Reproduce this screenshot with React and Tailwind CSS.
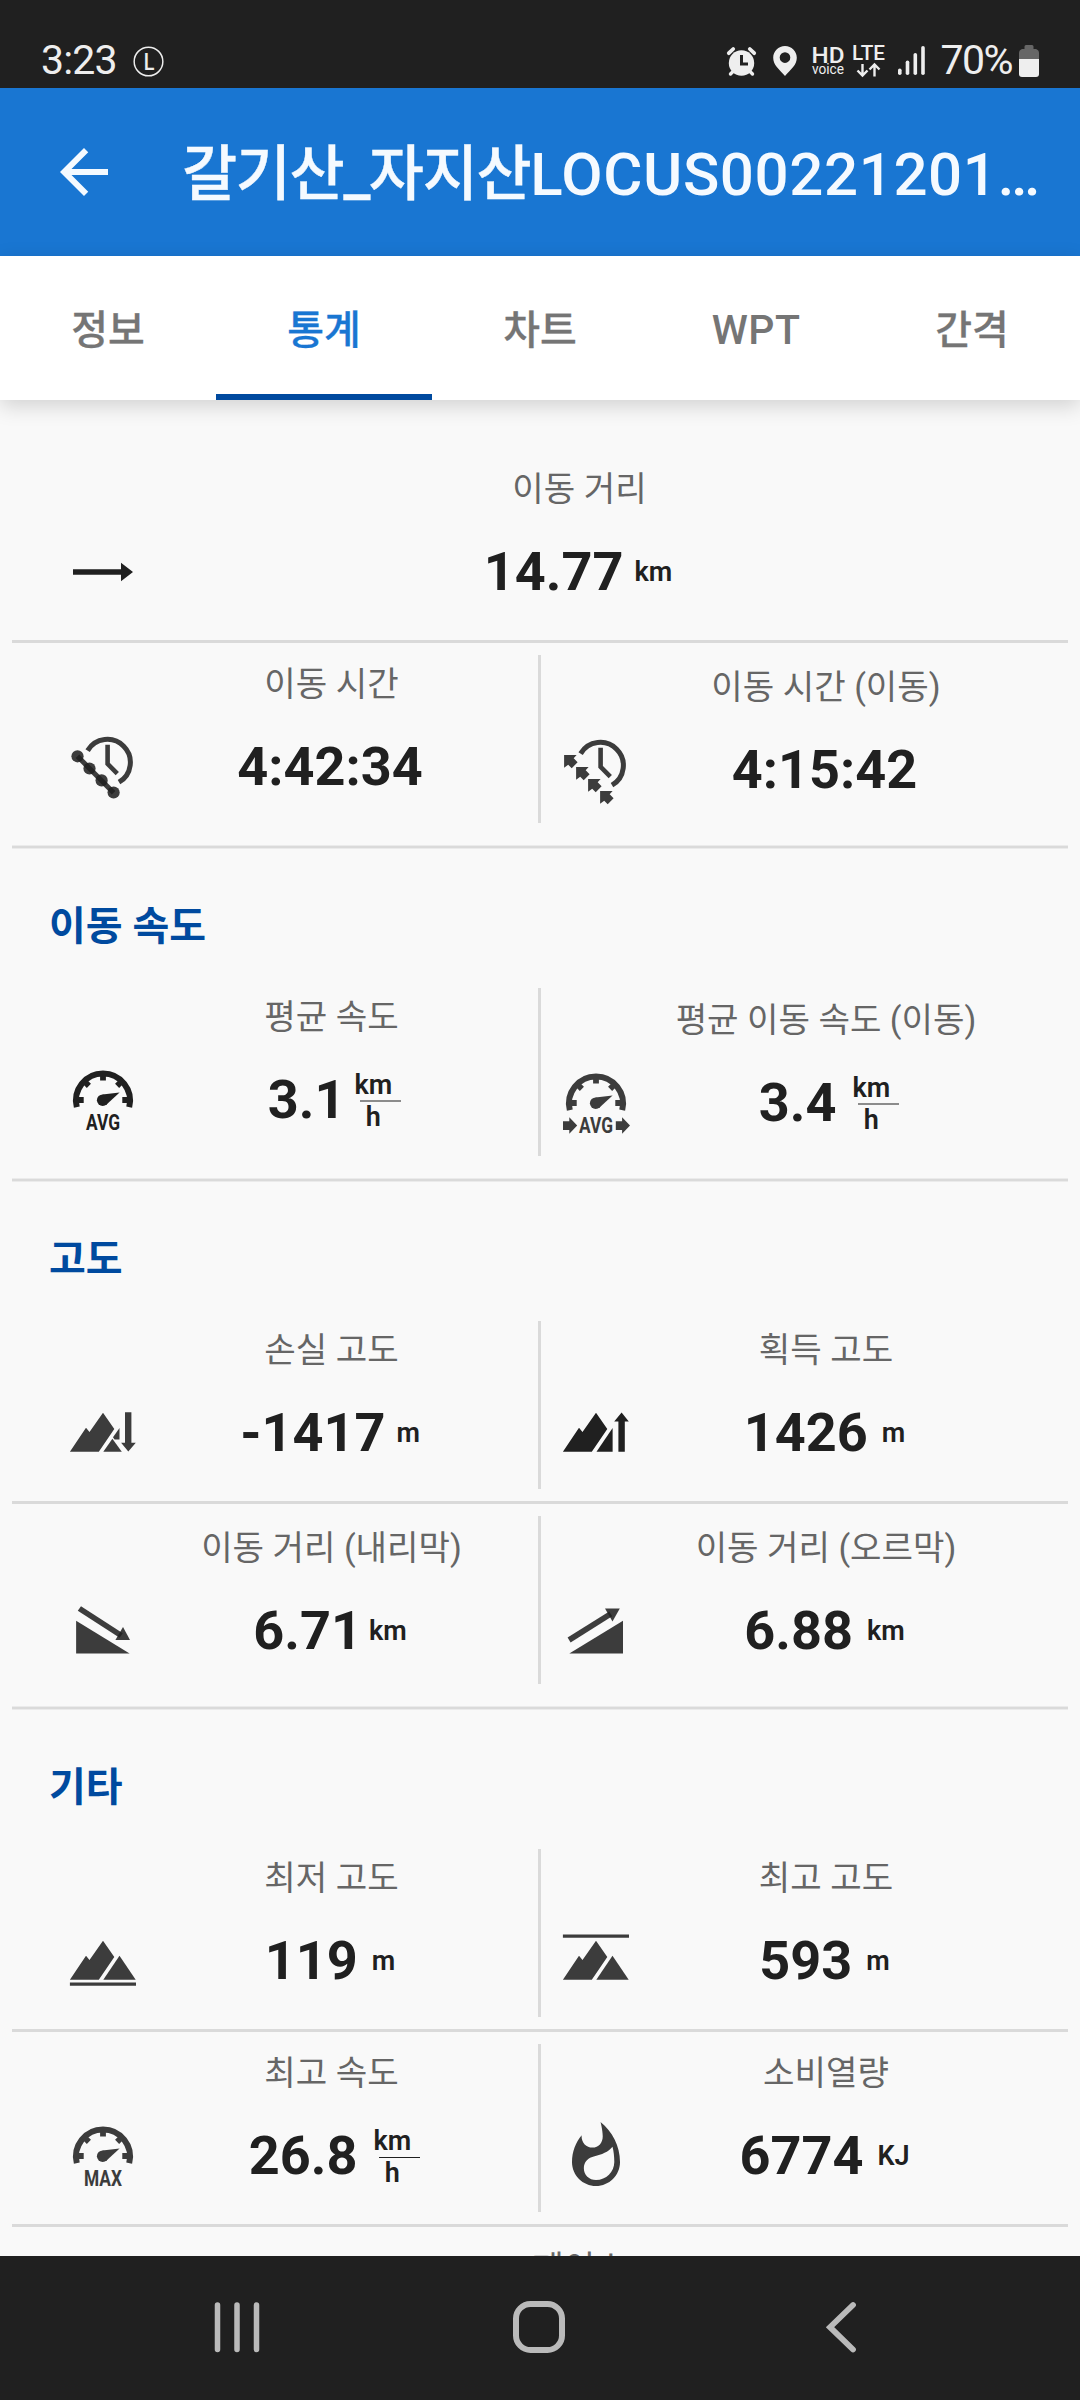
import { MdArrowBack } from 'react-icons/md'

const INK = '#202020'
const SOFT = '#3c3c3c'

const Svg = ({ children, fill = SOFT }) => (
  <svg viewBox="0 0 72 72" fill={fill} className="w-[72px] h-[72px] shrink-0 overflow-visible">
    {children}
  </svg>
)

const DistanceIcon = () => (
  <Svg fill={INK}>
    <path d="M6 33.2H54V26.7L66 36 54 45.2V38.8H6z" />
  </Svg>
)

const ClockFace = () => (
  <g fill="none" stroke={SOFT}>
    <path d="M20.6 19.6A23 23 0 1 1 52 51.2" strokeWidth="5" />
    <path d="M40.6 13.8V32.8L50.3 42.6" strokeWidth="4.6" />
  </g>
)

const TimeIcon = () => (
  <Svg>
    <ClockFace />
    <path d="M10.5 25.3L46.6 61.7" stroke={INK} strokeOpacity="0.87" strokeWidth="5" />
    {[[10.5, 25.3], [22.5, 37.5], [34.6, 49.4], [46.6, 61.5]].map(([x, y]) => (
      <circle key={x} cx={x} cy={y} r="6.1" fill={INK} fillOpacity="0.87" />
    ))}
  </Svg>
)

const TimeMovingIcon = () => (
  <Svg>
    <ClockFace />
    {[0, 12, 24, 36].map((d) => (
      <path key={d} transform={`translate(${d} ${d})`} d="M4.1 21H16.6L13.7 24.3 17.6 28.2 11.7 34.3 8.2 30.7 4.1 33.8z" />
    ))}
  </Svg>
)

const Gauge = ({ text, color = SOFT, children }) => (
  <Svg fill={color}>
    <path d="M9.8 43.1A27 27 0 1 1 62.2 43.1" fill="none" stroke={color} strokeWidth="6" />
    <path d="M11 36H16.7M61 36H55.3M36 11V16.4M17.5 17.5L21.9 21.9M54.5 17.5L50.1 21.9" fill="none" stroke={color} strokeWidth="5.8" />
    <circle cx="35.7" cy="36.2" r="5.8" />
    <path d="M35.5 30.4L52.6 28.6 39 40.9z" />
    <text
      x="36"
      y="66.2"
      fontSize="21.5"
      fontWeight="700"
      fontFamily="Roboto, sans-serif"
      textAnchor="middle"
      textLength={text === 'MAX' ? 38 : 34}
      lengthAdjust="spacingAndGlyphs"
    >
      {text}
    </text>
    {children}
  </Svg>
)

const AvgIcon = () => <Gauge text="AVG" color={INK} />
const MaxIcon = () => <Gauge text="MAX" />
const AvgMovingIcon = () => (
  <Gauge text="AVG">
    <path d="M3 54.3H9.3V50.3L17.2 58.5 9.3 66.7V63H3z" />
    <path d="M55.8 54.3H62.1V50.3L70 58.5 62.1 66.7V63H55.8z" />
  </Gauge>
)

const PEAK = 'M2.9 54.7L19 30.7 22.5 35 36 15.7 47.3 32 31.8 54.7z'

const LossIcon = () => (
  <Svg>
    <path d={PEAK} />
    <path d="M52.5 31V42.6H47.6L46 40.3z" />
    <path d="M45.4 41.8L54.8 54.7H36.3z" />
    <path d="M58 15.3H64.4V45.7H68.8L61.3 54.5 54.1 45.7H58z" />
  </Svg>
)

const GainIcon = () => (
  <Svg fill={INK}>
    <path d={PEAK} />
    <path d="M52.6 31V54.7H36.5z" />
    <path d="M58.4 54.7V24.5H54.2L61.6 15.6 68.8 24.5H64.8V54.7z" />
  </Svg>
)

const LowestIcon = () => (
  <Svg>
    <path d={PEAK} />
    <path d="M52.5 30.7L68.7 54.7H36.3z" />
    <path d="M2.9 57.4H69V60.7H2.9z" />
  </Svg>
)

const HighestIcon = () => (
  <Svg>
    <path d={PEAK} />
    <path d="M52.5 30.7L68.7 54.7H36.3z" />
    <path d="M2.9 9.4H69V12.7H2.9z" />
  </Svg>
)

const DownhillIcon = () => (
  <Svg>
    <path d="M9.1 25.7L62.6 58.5H9.1z" />
    <g fill={INK} fillOpacity="0.87">
      <path d="M14 11.2L55.8 38.2 52.6 42.8 10.8 15.8z" />
      <path d="M56 32L63 45H48.4z" />
    </g>
  </Svg>
)

const UphillIcon = () => (
  <Svg>
    <path d="M63 25.7V58.5H9.3z" />
    <g fill={INK} fillOpacity="0.87">
      <path d="M7.6 42.4L49.2 16.4 52.2 21.2 10.6 47.4z" />
      <path d="M45 13.4H59.8L52.5 26.5z" />
    </g>
  </Svg>
)

const FlameIcon = () => (
  <Svg>
    <path
      transform="scale(3)"
      fillRule="evenodd"
      d="M13.5.67s.74 2.65.74 4.8c0 2.06-1.35 3.73-3.41 3.73-2.07 0-3.63-1.67-3.63-3.73l.03-.36C5.21 7.51 4 10.62 4 14c0 4.42 3.58 8 8 8s8-3.58 8-8C20 8.61 17.41 3.8 13.5.67zM12 20c-2.3 0-4.05-1.75-4.05-3.95 0-2.1 1.35-3.5 3.6-4 2.25-.45 4.6-1.35 5.95-3.1.4 1.5.6 3.3.6 5.05 0 3.3-2.7 6-6.1 6z"
    />
  </Svg>
)

const SECTIONS = [
  {
    rows: [
      [{ icon: DistanceIcon, label: '이동 거리', value: '14.77', unit: 'km' }],
      [
        { icon: TimeIcon, label: '이동 시간', value: '4:42:34' },
        { icon: TimeMovingIcon, label: '이동 시간 (이동)', value: '4:15:42' },
      ],
    ],
  },
  {
    title: '이동 속도',
    rows: [
      [
        { icon: AvgIcon, label: '평균 속도', value: '3.1', unit: 'km/h' },
        { icon: AvgMovingIcon, label: '평균 이동 속도 (이동)', value: '3.4', unit: 'km/h' },
      ],
    ],
  },
  {
    title: '고도',
    rows: [
      [
        { icon: LossIcon, label: '손실 고도', value: '-1417', unit: 'm' },
        { icon: GainIcon, label: '획득 고도', value: '1426', unit: 'm' },
      ],
      [
        { icon: DownhillIcon, label: '이동 거리 (내리막)', value: '6.71', unit: 'km' },
        { icon: UphillIcon, label: '이동 거리 (오르막)', value: '6.88', unit: 'km' },
      ],
    ],
  },
  {
    title: '기타',
    rows: [
      [
        { icon: LowestIcon, label: '최저 고도', value: '119', unit: 'm' },
        { icon: HighestIcon, label: '최고 고도', value: '593', unit: 'm' },
      ],
      [
        { icon: MaxIcon, label: '최고 속도', value: '26.8', unit: 'km/h', thin: true },
        { icon: FlameIcon, label: '소비열량', value: '6774', unit: 'KJ' },
      ],
      [{ label: '페이스' }],
    ],
  },
]

const TABS = ['정보', '통계', '차트', 'WPT', '간격']

// the gap before the unit is kerned after a 1 or a 7
const KERN = { 1: '-ml-[7px]', 7: '-ml-[3px]' }

function Unit({ unit, thin }) {
  if (unit === 'km/h') {
    return (
      <span className="ml-[16px] pt-[2px] flex flex-col items-center text-[27px] leading-[27px] font-semibold">
        <span>km</span>
        <span className={`ml-[5px] -mr-[9px] w-[41px] ${thin ? 'h-px mt-[2px] mb-[2px] bg-[#202020]' : 'h-[2px] mt-px mb-[2px] bg-[#8c8c8c]'}`} />
        <span>h</span>
      </span>
    )
  }
  return <span className="ml-[14px] text-[27px] leading-[32px] font-semibold">{unit}</span>
}

function Stat({ icon: Icon, label, value, unit, thin, className }) {
  const offset = label.includes('(') ? 'pt-[3px]' : ''
  return (
    <div className={`flex h-[168px] ${offset} ${className}`}>
      <div className="w-[72px] shrink-0 pt-[76px]">{Icon && <Icon />}</div>
      <div className="flex-1 flex flex-col items-center whitespace-nowrap">
        <div className="mt-[9px] mr-px h-[40px] text-[34.2px] leading-[40px] text-[#666]">{label}</div>
        <div className="mt-[28px] mr-[4px] h-[70px] flex items-center text-[54px] leading-[64px] font-bold text-[#202020]">
          {value}
          {unit && (
            <span className={`flex ${KERN[value.slice(-1)] || ''}`}>
              <Unit unit={unit} thin={thin} />
            </span>
          )}
        </div>
      </div>
    </div>
  )
}

function StatRow({ stats, last }) {
  return (
    <>
      <div className="flex h-[192px] px-3 py-3">
        {stats.length === 1 ? (
          <Stat {...stats[0]} className="flex-1 pl-[55px] pr-[47px]" />
        ) : (
          <>
            <Stat {...stats[0]} className="w-[526px] pl-[55px] pr-[13px]" />
            <div className="w-[3px] bg-[#dadada]" />
            <Stat {...stats[1]} className="flex-1 pl-[19px] pr-[47px]" />
          </>
        )}
      </div>
      {last ? (
        <div className="mt-[10px] mx-3 h-1 border-y border-[#ebebeb] bg-[#dadada]" />
      ) : (
        <div className="mx-3 h-[3px] bg-[#dadada]" />
      )}
    </>
  )
}

function StatusBar() {
  return (
    <div className="h-[88px] shrink-0 bg-[#202020] text-[#eee] flex items-start justify-between pl-[41px] pr-[41px] pt-[36px]">
      <div className="flex">
        <span className="text-[41px] leading-[48px] tracking-[-0.8px]">3:23</span>
        <svg width="31" height="31" viewBox="0 0 32 32" className="ml-[16px] mt-[10px]">
          <circle cx="16" cy="16" r="14.8" fill="none" stroke="#eee" strokeWidth="1.5" />
          <text x="11" y="25" fontSize="25" fontWeight="500" fontFamily="Roboto, sans-serif" fill="#eee" textLength="11" lengthAdjust="spacingAndGlyphs">L</text>
        </svg>
      </div>
      <div className="flex">
        <svg width="204" height="34" viewBox="0 0 204 34" fill="#eee" className="mt-[8px] overflow-visible">
          {/* alarm */}
          <circle cx="17.5" cy="19" r="12.7" />
          <path d="M9.5 27L6.5 30M25.5 27L28.5 30" stroke="#eee" strokeWidth="3.4" strokeLinecap="round" />
          <path d="M4.8 9.2L9.2 5M30.2 9.2L25.8 5" stroke="#eee" strokeWidth="3.8" strokeLinecap="round" />
          <path d="M17.5 11V20H24" fill="none" stroke="#202020" strokeWidth="3" />
          {/* location */}
          <path fillRule="evenodd" d="M61 2C54.4 2 49.2 7.2 49.2 13.7C49.2 21 55 25 61 32C67 25 72.8 21 72.8 13.7C72.8 7.2 67.6 2 61 2zM61 8.3A5.3 5.3 0 1 1 61 18.9A5.3 5.3 0 1 1 61 8.3z" />
          <g fontFamily="Roboto, sans-serif">
            <text x="87.5" y="19" fontSize="21.5" fontWeight="500" textLength="33" lengthAdjust="spacingAndGlyphs">HD</text>
            <text x="88" y="30.3" fontSize="14" textLength="32" lengthAdjust="spacingAndGlyphs">voice</text>
            <text x="128" y="16" fontSize="21" fontWeight="500" textLength="33" lengthAdjust="spacingAndGlyphs">LTE</text>
          </g>
          <path d="M138.5 20V31M133.5 26.5L138.5 31.5L143.5 26.5M150.5 32.5V21.5M145.5 25.5L150.5 20.5L155.5 25.5" fill="none" stroke="#eee" strokeWidth="2.4" />
          <rect x="174" y="24.5" width="3.6" height="6.5" rx="1.8" />
          <rect x="181.7" y="16.5" width="3.6" height="14.5" rx="1.8" />
          <rect x="189.5" y="9" width="3.6" height="22" rx="1.8" />
          <rect x="197.2" y="2" width="3.6" height="29" rx="1.8" />
        </svg>
        <span className="ml-[12px] text-[41px] leading-[48px] tracking-[-1.5px]">70%</span>
        <svg width="20" height="33" viewBox="0 0 20 33" className="ml-[7px] mt-[9px]">
          <path d="M5.5 4V1.5Q5.5 0 7 0H13Q14.5 0 14.5 1.5V4H17Q20 5 20 8V15H0V8Q0 5 3 4z" fill="#666" />
          <path d="M0 14H20V29Q20 32 17 32H3Q0 32 0 29z" fill="#eee" />
        </svg>
      </div>
    </div>
  )
}

function NavBar() {
  return (
    <div className="h-[144px] shrink-0 bg-[#202020] flex items-center justify-between px-[208px]">
      <svg width="58" height="58" viewBox="0 0 58 58" fill="none" stroke="#bababa" strokeWidth="5.5" strokeLinecap="round">
        <path d="M9.5 6V50.5M29 6V50.5M48.5 6V50.5" />
      </svg>
      <svg width="58" height="58" viewBox="0 0 58 58" fill="none" stroke="#bababa" strokeWidth="6">
        <rect x="5" y="5" width="46" height="46" rx="14.5" />
      </svg>
      <svg width="58" height="58" viewBox="0 0 58 58" fill="none" stroke="#bababa" strokeWidth="5.8" strokeLinecap="round">
        <path d="M39 6L16 28.2L39 50.5" />
      </svg>
    </div>
  )
}

export default function App() {
  return (
    <div className="w-[1080px] h-[2400px] flex flex-col overflow-hidden bg-[#f9f9f9] font-[Roboto,'Noto_Sans_CJK_KR',sans-serif]">
      <StatusBar />
      <header className="h-[168px] shrink-0 bg-[#1976d2] text-[#f5faff] flex items-center pl-[48px]">
        <MdArrowBack className="w-[72px] h-[72px] shrink-0" />
        <h1 className="ml-[62px] pt-[5px] text-[60px] leading-[80px] font-medium whitespace-nowrap">
          <span className="tracking-[-1.4px] [-webkit-text-stroke:0.4px_#f5faff]">갈기산_자지산</span>
          <span className="tracking-[0.6px]">LOCUS00221201…</span>
        </h1>
      </header>
      <nav className="relative z-10 h-[144px] shrink-0 bg-white grid grid-cols-5 shadow-[0_6px_20px_rgba(0,0,0,0.16)]">
        {TABS.map((tab) => (
          <div
            key={tab}
            className={`flex items-center justify-center pt-[11px] font-medium border-b-6 ${tab === 'WPT' ? 'text-[41px] tracking-[0.5px]' : 'text-[40px] [-webkit-text-stroke:0.3px_currentColor]'} ${tab === '통계' ? 'text-[#1976d2] border-[#004a9f]' : 'text-[#757575] border-transparent'}`}
          >
            {tab}
          </div>
        ))}
      </nav>
      <main className="flex-1 min-h-0 overflow-hidden pt-[48px]">
        {SECTIONS.map((section, i) => (
          <section key={i}>
            {section.title && (
              <h2 className="h-[127px] pt-[53px] pl-[49px] text-[40px] leading-[50px] font-bold text-[#004a9f]">{section.title}</h2>
            )}
            {section.rows.map((stats, j) => (
              <StatRow key={j} stats={stats} last={j === section.rows.length - 1} />
            ))}
          </section>
        ))}
      </main>
      <NavBar />
    </div>
  )
}
